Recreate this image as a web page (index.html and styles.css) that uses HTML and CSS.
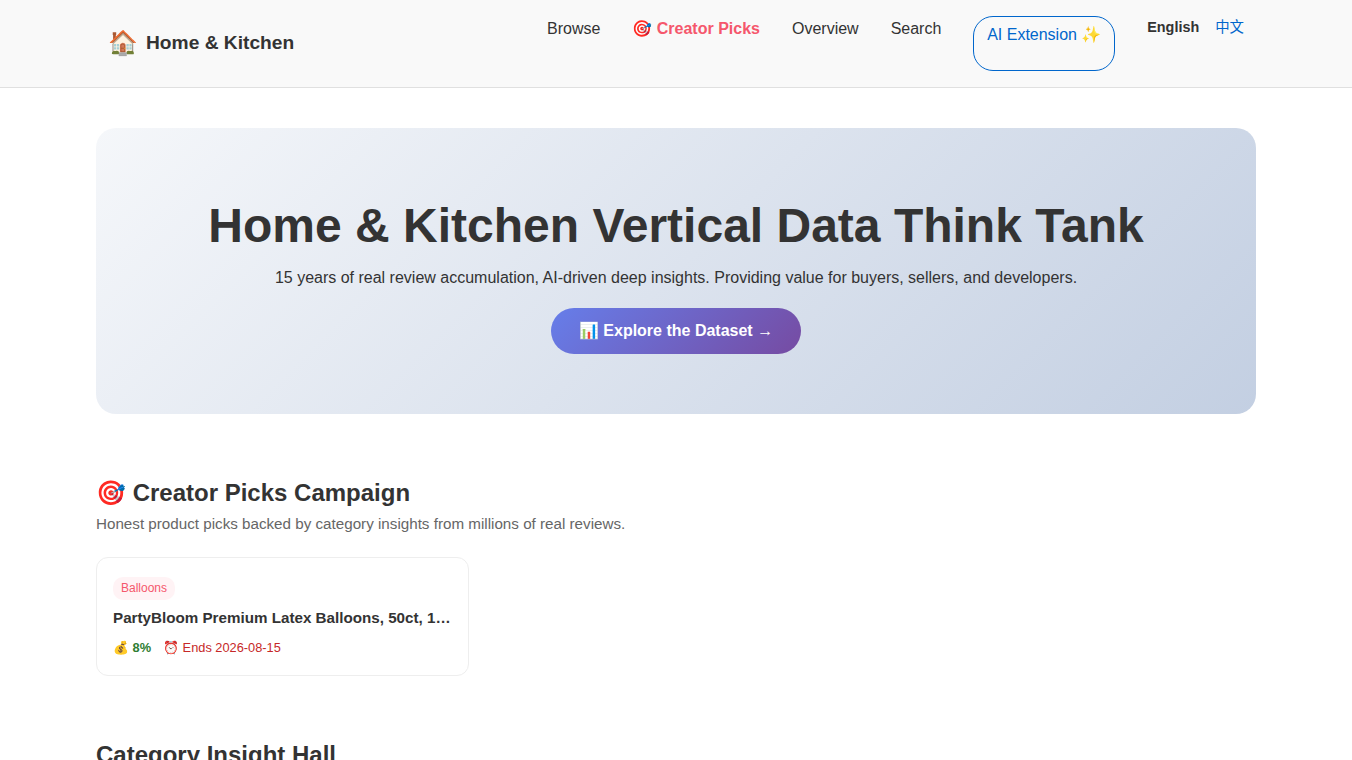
FILE: index.html
```html
<!DOCTYPE html>
<html lang="en">
<head>
<meta charset="utf-8">
<title>Home &amp; Kitchen</title>
<link rel="stylesheet" href="styles.css">
</head>
<body>
<header class="site-header">
  <div class="nav-wrap">
    <a class="brand"><span class="brand-icon">🏠</span><span>Home &amp; Kitchen</span></a>
    <nav class="nav">
      <a class="nav-link">Browse</a>
      <a class="nav-link nav-picks">🎯 Creator Picks</a>
      <a class="nav-link">Overview</a>
      <a class="nav-link">Search</a>
      <a class="nav-link nav-ext">AI Extension ✨</a>
      <div class="langs"><strong>English</strong><a class="lang-link">中文</a></div>
    </nav>
  </div>
</header>
<main class="main">
  <section class="hero">
    <h1>Home &amp; Kitchen Vertical Data Think Tank</h1>
    <p>15 years of real review accumulation, AI-driven deep insights. Providing value for buyers, sellers, and developers.</p>
    <a class="cta">📊 Explore the Dataset →</a>
  </section>
  <section class="campaign">
    <h2>🎯 Creator Picks Campaign</h2>
    <p class="sub">Honest product picks backed by category insights from millions of real reviews.</p>
    <div class="grid">
      <a class="card">
        <span class="tag">Balloons</span>
        <h3>PartyBloom Premium Latex Balloons, 50ct, 12 inch</h3>
        <div class="meta"><span class="rate">💰 <b>8%</b></span><span class="ends">⏰ Ends 2026-08-15</span></div>
      </a>
    </div>
  </section>
  <section>
    <h2>Category Insight Hall</h2>
  </section>
</main>
</body>
</html>
```

FILE: styles.css
```css
* { box-sizing: border-box; margin: 0; padding: 0; }
html { overflow: hidden; }
body {
  height: 760px;
  overflow: hidden;
  font-family: "Liberation Sans", "Noto Sans CJK SC", sans-serif;
  font-size: 16px;
  line-height: 1.6;
  color: #333;
  background: #fff;
}
.site-header { height: 88px; background: #f9f9f9; border-bottom: 1px solid #e0e0e0; }
.nav-wrap {
  width: 1160px;
  height: 87px;
  margin: 0 auto;
  padding: 16px 12px;
  display: flex;
  justify-content: space-between;
}
.brand { display: flex; align-items: center; gap: 8px; font-size: 19.2px; font-weight: bold; }
.brand-icon { font-size: 24px; }
.nav { display: flex; gap: 32px; }
.nav-picks { color: #f5576c; font-weight: bold; }
.nav-ext { color: #0066cc; border: 1px solid #0066cc; border-radius: 20px; padding: 5px 12.8px; }
.langs { display: flex; gap: 16px; font-size: 14.4px; }
.lang-link { color: #0066cc; }
.main { width: 1160px; margin: 0 auto; padding-top: 40px; }
.hero {
  height: 286px;
  padding-top: 60px;
  border-radius: 20px;
  text-align: center;
  background: linear-gradient(135deg, #f5f7fa 0%, #c3cfe2 100%);
}
.hero h1 { font-size: 48px; line-height: 76.8px; }
.hero p { line-height: 26px; }
.cta {
  display: inline-block;
  margin-top: 17px;
  padding: 10px 28px;
  border-radius: 25px;
  color: #fff;
  font-weight: bold;
  line-height: 26px;
  background: linear-gradient(135deg, #667eea 0%, #764ba2 100%);
}
h2 { font-size: 24px; line-height: 38px; }
.campaign { padding-top: 60px; margin-bottom: 60px; }
.sub { margin-bottom: 21px; font-size: 15.2px; line-height: 24px; color: #666; }
.grid { display: grid; grid-template-columns: repeat(3, minmax(0, 1fr)); gap: 20px; }
.card { height: 119px; padding: 19px 16px; border: 1px solid #eee; border-radius: 12px; }
.tag {
  display: block;
  width: fit-content;
  padding: 2px 8px;
  border-radius: 10px;
  background: #fff3f5;
  color: #f5576c;
  font-size: 12px;
  line-height: 19px;
}
.card h3 {
  margin-top: 6px;
  font-size: 15.2px;
  line-height: 24px;
  white-space: nowrap;
  overflow: hidden;
  text-overflow: ellipsis;
}
.meta { display: flex; gap: 12px; margin-top: 7px; font-size: 12.8px; line-height: 21px; }
.rate { color: #2e7d32; }
.ends { color: #c62828; }
```
